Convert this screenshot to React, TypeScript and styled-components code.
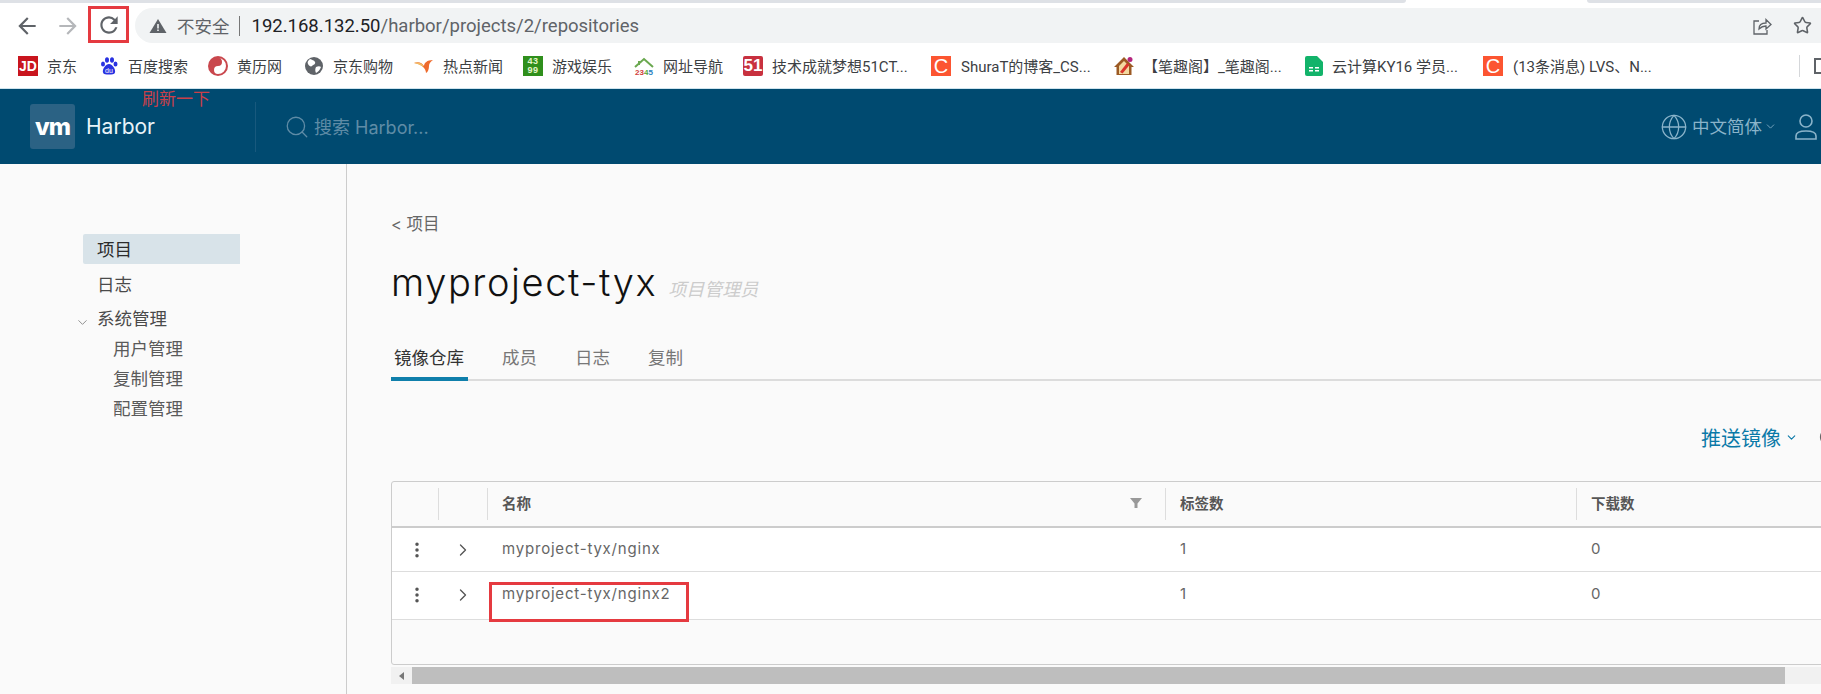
import styled, { createGlobalStyle } from 'styled-components';
import { ChevronDown, ChevronRight, EllipsisVertical, Globe, RotateCw, Search, Star } from 'lucide-react';

const CJK = `"Noto Sans CJK SC", sans-serif`;

const GlobalStyle = createGlobalStyle`
  html, body {
    margin: 0;
    padding: 0;
    width: 1821px;
    height: 694px;
    overflow: hidden;
    background: #fafafa;
    font-family: Roboto, ${CJK};
  }
  * {
    box-sizing: border-box;
  }
`;

const Page = styled.div`
  width: 1821px;
  height: 694px;
  display: flex;
  flex-direction: column;
  overflow: hidden;
`;

/* browser chrome */
const TabStrip = styled.div`
  height: 3px;
  display: flex;
  background: #fff;
`;

const TabEdge = styled.div<{ $w: number }>`
  width: ${(p) => p.$w}px;
  background: #dee1e6;
  &:first-child {
    border-bottom-right-radius: 4px;
  }
  &:last-child {
    border-bottom-left-radius: 4px;
    margin-left: auto;
  }
`;

const Toolbar = styled.div`
  height: 40px;
  display: flex;
  align-items: flex-end;
  padding-left: 6px;
  background: #fff;
`;

const NavButton = styled.div<{ $w: number; $muted?: boolean }>`
  width: ${(p) => p.$w}px;
  height: 35px;
  display: flex;
  align-items: center;
  justify-content: center;
  color: ${(p) => (p.$muted ? '#b5b7ba' : '#5f6368')};
`;

const ReloadButton = styled.div`
  width: 41px;
  height: 37px;
  display: flex;
  align-items: center;
  justify-content: center;
  border: 3px solid #e53a40;
  color: #5f6368;
`;

const AddressBar = styled.div`
  flex: 1;
  height: 35px;
  margin-left: 6px;
  display: flex;
  align-items: center;
  padding: 0 9px 0 14px;
  border-radius: 18px 0 0 18px;
  background: #f1f3f4;
  color: #5f6368;
`;

const Warning = styled.svg`
  width: 18px;
  height: 16px;
  margin-right: 10px;
`;

const Insecure = styled.span`
  font-size: 17.5px;
  color: #5f6368;
  font-family: ${CJK};
`;

const BarDivider = styled.span`
  width: 1px;
  height: 20px;
  margin: 0 12px 0 9px;
  background: #777;
`;

const UrlHost = styled.span`
  font-size: 18.5px;
  color: #202124;
`;

const UrlPath = styled.span`
  font-size: 18.5px;
  color: #5f6368;
`;

const BarActions = styled.div`
  margin-left: auto;
  display: flex;
  align-items: center;
  gap: 21px;
  color: #5f6368;
`;

const Bookmarks = styled.div`
  height: 46px;
  display: flex;
  align-items: center;
  padding-left: 18px;
  background: #fff;
  border-bottom: 1px solid #cfe4ee;
`;

const Bookmark = styled.div<{ $w: number }>`
  width: ${(p) => p.$w}px;
  flex: none;
  display: flex;
  align-items: center;
  gap: 9px;
  font-size: 15px;
  font-family: Roboto, ${CJK};
  color: #3c4043;
  white-space: nowrap;
`;

const Favicon = styled.span<{ $bg: string; $radius?: number }>`
  width: 20px;
  height: 20px;
  flex: none;
  display: flex;
  align-items: center;
  justify-content: center;
  border-radius: ${(p) => p.$radius ?? 0}px;
  background: ${(p) => p.$bg};
  color: #fff;
  line-height: 1;
  font-family: "Liberation Sans", sans-serif;
`;

const BrandFavicon = styled(Favicon)`
  margin-right: 1px;
`;

const FaviconText = styled.span<{ $size: number; $weight?: number }>`
  font-size: ${(p) => p.$size}px;
  font-weight: ${(p) => p.$weight ?? 400};
`;

const GameGrid = styled.span`
  font-size: 9px;
  line-height: 9px;
  text-align: center;
  font-weight: 700;
  letter-spacing: 0.5px;
  color: #e3f5c8;
`;

const BookmarkEnd = styled.div`
  margin-left: auto;
  width: 22px;
  flex: none;
  display: flex;
  align-items: center;
  overflow: hidden;
`;

const EndDivider = styled.span`
  width: 1px;
  height: 22px;
  flex: none;
  background: #d5d7da;
`;

const AppsGlyph = styled.span`
  width: 15px;
  height: 16px;
  flex: none;
  margin-left: 14px;
  border: 2px solid #5f6368;
  background: radial-gradient(circle, #5f6368 1px, transparent 1.5px) center / 4px 4px repeat-y;
`;

/* harbor header */
const Header = styled.header`
  position: relative;
  height: 75px;
  flex: none;
  display: flex;
  align-items: center;
  padding-left: 30px;
  background: #004a70;
  color: #fff;
`;

const Annotation = styled.span`
  position: absolute;
  left: 142px;
  top: -2px;
  font-size: 17px;
  line-height: 22px;
  color: #c9404a;
  font-family: ${CJK};
`;

const LogoTile = styled.div`
  width: 45px;
  height: 45px;
  display: flex;
  align-items: center;
  justify-content: center;
  border-radius: 3px;
  background: #2b6284;
  font-family: Inter, sans-serif;
  font-weight: 800;
  font-size: 24px;
  letter-spacing: -1px;
  color: #fff;
`;

const Brand = styled.span`
  margin-left: 11px;
  width: 169px;
  font-family: Inter, sans-serif;
  font-size: 21px;
  color: #e8f3f8;
`;

const HeaderDivider = styled.div`
  width: 1px;
  height: 50px;
  background: #18597d;
`;

const SearchBox = styled.div`
  margin-left: 28px;
  display: flex;
  align-items: center;
  gap: 4px;
  color: #5f8ca6;
  font-size: 18px;
  font-family: Inter, ${CJK};
`;

const SearchHint = styled.span`
  font-size: 18px;
  margin-top: -2px;
`;

const HeaderRight = styled.div`
  margin-left: auto;
  display: flex;
  align-items: center;
  color: #8ab4ca;
  font-size: 17.5px;
  font-family: ${CJK};
`;

const LangLabel = styled.span`
  margin: -3px 2px 0 4px;
`;

const UserIcon = styled.svg`
  width: 24px;
  height: 28px;
  margin-left: 17px;
  margin-right: 3px;
`;

/* body */
const Body = styled.div`
  flex: 1;
  display: flex;
  min-height: 0;
`;

const Sidebar = styled.nav`
  width: 347px;
  flex: none;
  padding: 70px 0 0 83px;
  border-right: 1px solid #ccc;
  font-family: ${CJK};
  font-size: 17.5px;
`;

const NavItem = styled.div<{ $active?: boolean; $parent?: boolean }>`
  position: relative;
  width: 157px;
  height: 30px;
  margin-bottom: ${(p) => (p.$parent ? 0 : 4.5)}px;
  padding-left: 14px;
  line-height: 30px;
  border-radius: 2px 0 0 2px;
  color: ${(p) => (p.$active ? '#2b2b2b' : '#4a4a4a')};
  background: ${(p) => (p.$active ? '#d8e3e9' : 'transparent')};
`;

const NavCaret = styled.span`
  position: absolute;
  left: -8px;
  top: 5px;
  color: #8a8a8a;
`;

const SubItem = styled.div`
  height: 30px;
  padding-left: 30px;
  line-height: 30px;
  color: #5a5a5a;
`;

const Main = styled.main`
  flex: 1;
  min-width: 0;
  padding: 48px 0 0 44px;
  overflow: hidden;
`;

const BackLink = styled.div`
  height: 24px;
  line-height: 24px;
  font-size: 16.5px;
  font-family: Inter, ${CJK};
  color: #666;
`;

const TitleRow = styled.div`
  margin-top: 21px;
  height: 50px;
  display: flex;
  align-items: center;
`;

const Title = styled.h1`
  margin: 0;
  font-family: Inter, sans-serif;
  font-weight: 300;
  font-size: 38px;
  letter-spacing: 1.6px;
  color: #111;
`;

const Role = styled.span`
  margin: 12px 0 0 11px;
  font-style: italic;
  font-size: 18px;
  font-family: ${CJK};
  color: #ccc;
`;

const Tabs = styled.div`
  margin-top: 31px;
  height: 43px;
  display: flex;
  border-bottom: 2px solid #dcdcdc;
`;

const Tab = styled.div<{ $active?: boolean }>`
  height: 43px;
  padding: 6px 4px 0 3px;
  margin-right: 31px;
  font-size: 17.5px;
  line-height: 26px;
  font-family: ${CJK};
  color: ${(p) => (p.$active ? '#333' : '#777')};
  border-bottom: 4px solid ${(p) => (p.$active ? '#0f7fab' : 'transparent')};
`;

const ActionRow = styled.div`
  margin-top: 44px;
  height: 24px;
  display: flex;
  align-items: center;
  justify-content: flex-end;
  color: #0a79a8;
  font-size: 20px;
  font-family: ${CJK};
`;

const ActionCaret = styled.span`
  display: flex;
  margin: 0 20px 0 4px;
`;

const RefreshStub = styled.span`
  display: flex;
  margin-right: -17px;
  color: #666;
`;

const TableFrame = styled.div`
  margin-top: 32px;
  width: 1500px;
  height: 184px;
  border: 1px solid #ccc;
  border-radius: 3px;
  background: #fafafa;
`;

const TableGrid = `
  display: grid;
  grid-template-columns: 46px 49px 678px 411px 1fr;
`;

const HeadRow = styled.div`
  ${TableGrid}
  height: 46px;
  border-bottom: 2px solid #ccc;
`;

const HeadCell = styled.div<{ $plain?: boolean }>`
  margin: 6px 0;
  padding: 0 23px 3px 14px;
  display: flex;
  align-items: center;
  justify-content: space-between;
  border-left: 1px solid ${(p) => (p.$plain ? 'transparent' : '#ddd')};
  font-size: 14.5px;
  font-weight: 700;
  font-family: ${CJK};
  color: #565656;
`;

const Row = styled.div<{ $h: number; $top?: number }>`
  ${TableGrid}
  height: ${(p) => p.$h}px;
  padding-top: ${(p) => p.$top ?? 0}px;
  background: #fff;
  border-bottom: 1px solid #ddd;
`;

const IconCell = styled.div`
  height: 22px;
  margin-top: 11px;
  display: flex;
  align-items: center;
  justify-content: center;
  color: #555;
  &:first-child {
    padding-left: 4px;
  }
`;

const Cell = styled.div`
  position: relative;
  padding: 10px 0 0 15px;
  line-height: 22px;
  font-family: Inter, sans-serif;
  font-size: 15px;
  letter-spacing: 0.8px;
  color: #666;
`;

const Highlight = styled.span`
  position: absolute;
  left: 2px;
  top: 9px;
  width: 200px;
  height: 40px;
  border: 3px solid #e53a40;
`;

const ScrollBar = styled.div`
  margin-top: 2px;
  height: 17px;
  width: 1430px;
  display: flex;
  background: #f1f1f1;
`;

const ScrollArrow = styled.div`
  width: 21px;
  display: flex;
  align-items: center;
  justify-content: center;
  &::before {
    content: '';
    border-style: solid;
    border-width: 4px 5px 4px 0;
    border-color: transparent #777 transparent transparent;
  }
`;

const ScrollThumb = styled.div`
  width: 1373px;
  background: #bebebe;
`;

const bookmarks = [
  { w: 81, label: '京东', icon: <Favicon $bg="#c9151e"><FaviconText $size={14} $weight={700}>JD</FaviconText></Favicon> },
  {
    w: 109,
    label: '百度搜索',
    icon: (
      <svg width="20" height="20" viewBox="0 0 20 20" fill="#2932e1">
        <ellipse cx="4" cy="8" rx="2" ry="2.6" />
        <ellipse cx="8" cy="4" rx="2" ry="2.8" />
        <ellipse cx="13" cy="4" rx="2" ry="2.8" />
        <ellipse cx="16.5" cy="8" rx="2" ry="2.6" />
        <path d="M10 8c3 0 7 5 6 8.500c-.6 2-3 2-6 2s-5.500 0-6-2C3 13 7 8 10 8z" />
        <text x="10" y="17" fontSize="7" fontFamily="Liberation Sans" fill="#fff" textAnchor="middle">du</text>
      </svg>
    ),
  },
  {
    w: 96,
    label: '黄历网',
    icon: (
      <svg width="20" height="20" viewBox="0 0 20 20">
        <circle cx="10" cy="10" r="10" fill="#c9474d" />
        <path d="M10 2a4 4 0 0 1 0 8 4 4 0 0 0 0 8 8 8 0 0 0 0-16z" fill="#fff" />
        <circle cx="10" cy="6" r="1.400" fill="#c9474d" />
        <circle cx="10" cy="14" r="1.400" fill="#fff" />
      </svg>
    ),
  },
  {
    w: 110,
    label: '京东购物',
    icon: (
      <svg width="20" height="20" viewBox="0 0 20 20">
        <circle cx="10" cy="10" r="9" fill="#5f6368" />
        <path d="M6 3c2 1 4 1 5 3s-2 3-3 4-3 0-4-2 0-3 2-5zm6 8c2-1 4-1 5 0-1 3-3 5-5 6-1-2-1-4 0-6z" fill="#fff" />
      </svg>
    ),
  },
  {
    w: 109,
    label: '热点新闻',
    icon: (
      <svg width="20" height="20" viewBox="0 0 20 20">
        <path d="M0 7c5-2 8 0 10 3 0-3 3-6 9-6-3 2-4 4-4 6 0 3-1 6-3 7 0-5-5-9-12-10z" fill="#ee6a2c" />
        <path d="M0 7c4-1 7 0 9 2 0 1 0 2 1 3-3-3-6-4-10-5z" fill="#f2bd63" />
      </svg>
    ),
  },
  {
    w: 111,
    label: '游戏娱乐',
    icon: (
      <Favicon $bg="#2f8f1c">
        <GameGrid>43<br />99</GameGrid>
      </Favicon>
    ),
  },
  {
    w: 109,
    label: '网址导航',
    icon: (
      <svg width="20" height="20" viewBox="0 0 20 20">
        <path d="M1 11 10 3l9 8M5 9V5" fill="none" stroke="#6aa84f" strokeWidth="2" />
        <text x="10" y="19" fontSize="8" fontWeight="700" fontFamily="Liberation Sans" textAnchor="middle">
          <tspan fill="#d0403c">23</tspan>
          <tspan fill="#5aa63c">4</tspan>
          <tspan fill="#2a7fc0">5</tspan>
        </text>
      </svg>
    ),
  },
  { w: 188, label: '技术成就梦想51CT...', icon: <Favicon $bg="#c8313f" $radius={2}><FaviconText $size={17} $weight={700}>51</FaviconText></Favicon> },
  { w: 183, label: 'ShuraT的博客_CS...', icon: <BrandFavicon $bg="#fc5531"><FaviconText $size={20}>C</FaviconText></BrandFavicon> },
  {
    w: 191,
    label: '【笔趣阁】_笔趣阁...',
    icon: (
      <svg width="20" height="20" viewBox="0 0 20 20">
        <path d="M10 1 0 11h2.500v8h15v-8H20z" fill="#9c5a24" />
        <path d="M10 5 5 10v8h10v-8z" fill="#f3d9a0" />
        <path d="M6 16 13 7l2.500 2-7 8.500z" fill="#d8342c" />
        <circle cx="16" cy="3.500" r="2.500" fill="#b5257e" />
      </svg>
    ),
  },
  {
    w: 178,
    label: '云计算KY16 学员...',
    icon: (
      <svg width="18" height="20" viewBox="0 0 18 20">
        <path d="M2 0h10l6 6v12a2 2 0 0 1-2 2H2a2 2 0 0 1-2-2V2a2 2 0 0 1 2-2z" fill="#12b36a" />
        <path d="M4 11h4v1.500H4zm6 0h4v1.500h-4zm-6 3h4v1.500H4zm6 0h4v1.500h-4z" fill="#fff" />
      </svg>
    ),
  },
  { w: 172, label: '(13条消息) LVS、N...', icon: <BrandFavicon $bg="#fc5531"><FaviconText $size={20}>C</FaviconText></BrandFavicon> },
];

const App = () => (
  <Page>
    <GlobalStyle />
    <TabStrip>
      <TabEdge $w={1406} />
      <TabEdge $w={234} />
    </TabStrip>
    <Toolbar>
      <NavButton $w={42}>
        <svg width="26" height="26" viewBox="0 0 24 24" fill="currentColor">
          <path d="M20 11H7.830l5.590-5.590L12 4l-8 8 8 8 1.410-1.410L7.830 13H20v-2z" />
        </svg>
      </NavButton>
      <NavButton $w={40} $muted>
        <svg width="26" height="26" viewBox="0 0 24 24" fill="currentColor">
          <path d="M12 4l-1.410 1.410L16.170 11H4v2h12.170l-5.580 5.590L12 20l8-8z" />
        </svg>
      </NavButton>
      <ReloadButton>
        <svg width="26" height="26" viewBox="0 0 24 24" fill="currentColor">
          <path d="M17.650 6.350A7.958 7.958 0 0 0 12 4c-4.420 0-7.990 3.580-7.990 8s3.570 8 7.990 8c3.730 0 6.840-2.550 7.730-6h-2.080A5.990 5.990 0 0 1 12 18c-3.310 0-6-2.690-6-6s2.690-6 6-6c1.660 0 3.140.69 4.220 1.780L13 11h7V4l-2.350 2.350z" />
        </svg>
      </ReloadButton>
      <AddressBar>
        <Warning viewBox="0 0 18 16">
          <path d="M9 1 17.500 15H.5z" fill="#5f6368" />
          <path d="M8.200 6h1.600v4.500H8.200zm0 5.500h1.600V13H8.200z" fill="#f1f3f4" />
        </Warning>
        <Insecure>不安全</Insecure>
        <BarDivider />
        <UrlHost>192.168.132.50</UrlHost>
        <UrlPath>/harbor/projects/2/repositories</UrlPath>
        <BarActions>
          <svg width="20" height="20" viewBox="0 0 20 20" fill="none" stroke="#5f6368" strokeWidth="1.300">
            <path d="M7 5H2v13h13v-4" />
            <path d="M7 13c0-4 3-6 7-6V3.500l5 5-5 4.500V10c-3 0-5 1-7 3z" />
          </svg>
          <Star size={19} strokeWidth={2} />
        </BarActions>
      </AddressBar>
    </Toolbar>
    <Bookmarks>
      {bookmarks.map((b) => (
        <Bookmark key={b.label} $w={b.w}>
          {b.icon}
          <span>{b.label}</span>
        </Bookmark>
      ))}
      <BookmarkEnd>
        <EndDivider />
        <AppsGlyph />
      </BookmarkEnd>
    </Bookmarks>
    <Header>
      <Annotation>刷新一下</Annotation>
      <LogoTile>vm</LogoTile>
      <Brand>Harbor</Brand>
      <HeaderDivider />
      <SearchBox>
        <Search size={26} strokeWidth={1.2} />
        <SearchHint>搜索 Harbor...</SearchHint>
      </SearchBox>
      <HeaderRight>
        <Globe size={28} strokeWidth={1.1} />
        <LangLabel>中文简体</LangLabel>
        <ChevronDown size={13} strokeWidth={1.5} />
        <UserIcon viewBox="0 0 24 28" fill="none" stroke="#8ab4ca" strokeWidth="1.600">
          <circle cx="12" cy="8" r="6" />
          <path d="M2 26v-3c0-3 3-5 10-5s10 2 10 5v3z" />
        </UserIcon>
      </HeaderRight>
    </Header>
    <Body>
      <Sidebar>
        <NavItem $active>项目</NavItem>
        <NavItem>日志</NavItem>
        <NavItem $parent>
          <NavCaret>
            <ChevronDown size={15} strokeWidth={1.5} />
          </NavCaret>
          系统管理
        </NavItem>
        <SubItem>用户管理</SubItem>
        <SubItem>复制管理</SubItem>
        <SubItem>配置管理</SubItem>
      </Sidebar>
      <Main>
        <BackLink>&lt; 项目</BackLink>
        <TitleRow>
          <Title>myproject-tyx</Title>
          <Role>项目管理员</Role>
        </TitleRow>
        <Tabs>
          <Tab $active>镜像仓库</Tab>
          <Tab>成员</Tab>
          <Tab>日志</Tab>
          <Tab>复制</Tab>
        </Tabs>
        <ActionRow>
          推送镜像
          <ActionCaret>
            <ChevronDown size={13} strokeWidth={2} />
          </ActionCaret>
          <RefreshStub>
            <RotateCw size={20} strokeWidth={1.5} />
          </RefreshStub>
        </ActionRow>
        <TableFrame>
          <HeadRow>
            <HeadCell $plain />
            <HeadCell />
            <HeadCell>
              名称
              <svg width="12" height="12" viewBox="0 0 12 12" fill="#999">
                <path d="M0 1h12L7.500 6.500V11h-3V6.500z" />
              </svg>
            </HeadCell>
            <HeadCell>标签数</HeadCell>
            <HeadCell>下载数</HeadCell>
          </HeadRow>
          <Row $h={44}>
            <IconCell><EllipsisVertical size={20} strokeWidth={2.2} /></IconCell>
            <IconCell><ChevronRight size={20} strokeWidth={1.6} /></IconCell>
            <Cell>myproject-tyx/nginx</Cell>
            <Cell>1</Cell>
            <Cell>0</Cell>
          </Row>
          <Row $h={48} $top={1}>
            <IconCell><EllipsisVertical size={20} strokeWidth={2.2} /></IconCell>
            <IconCell><ChevronRight size={20} strokeWidth={1.6} /></IconCell>
            <Cell>
              myproject-tyx/nginx2
              <Highlight />
            </Cell>
            <Cell>1</Cell>
            <Cell>0</Cell>
          </Row>
        </TableFrame>
        <ScrollBar>
          <ScrollArrow />
          <ScrollThumb />
        </ScrollBar>
      </Main>
    </Body>
  </Page>
);

export default App;
